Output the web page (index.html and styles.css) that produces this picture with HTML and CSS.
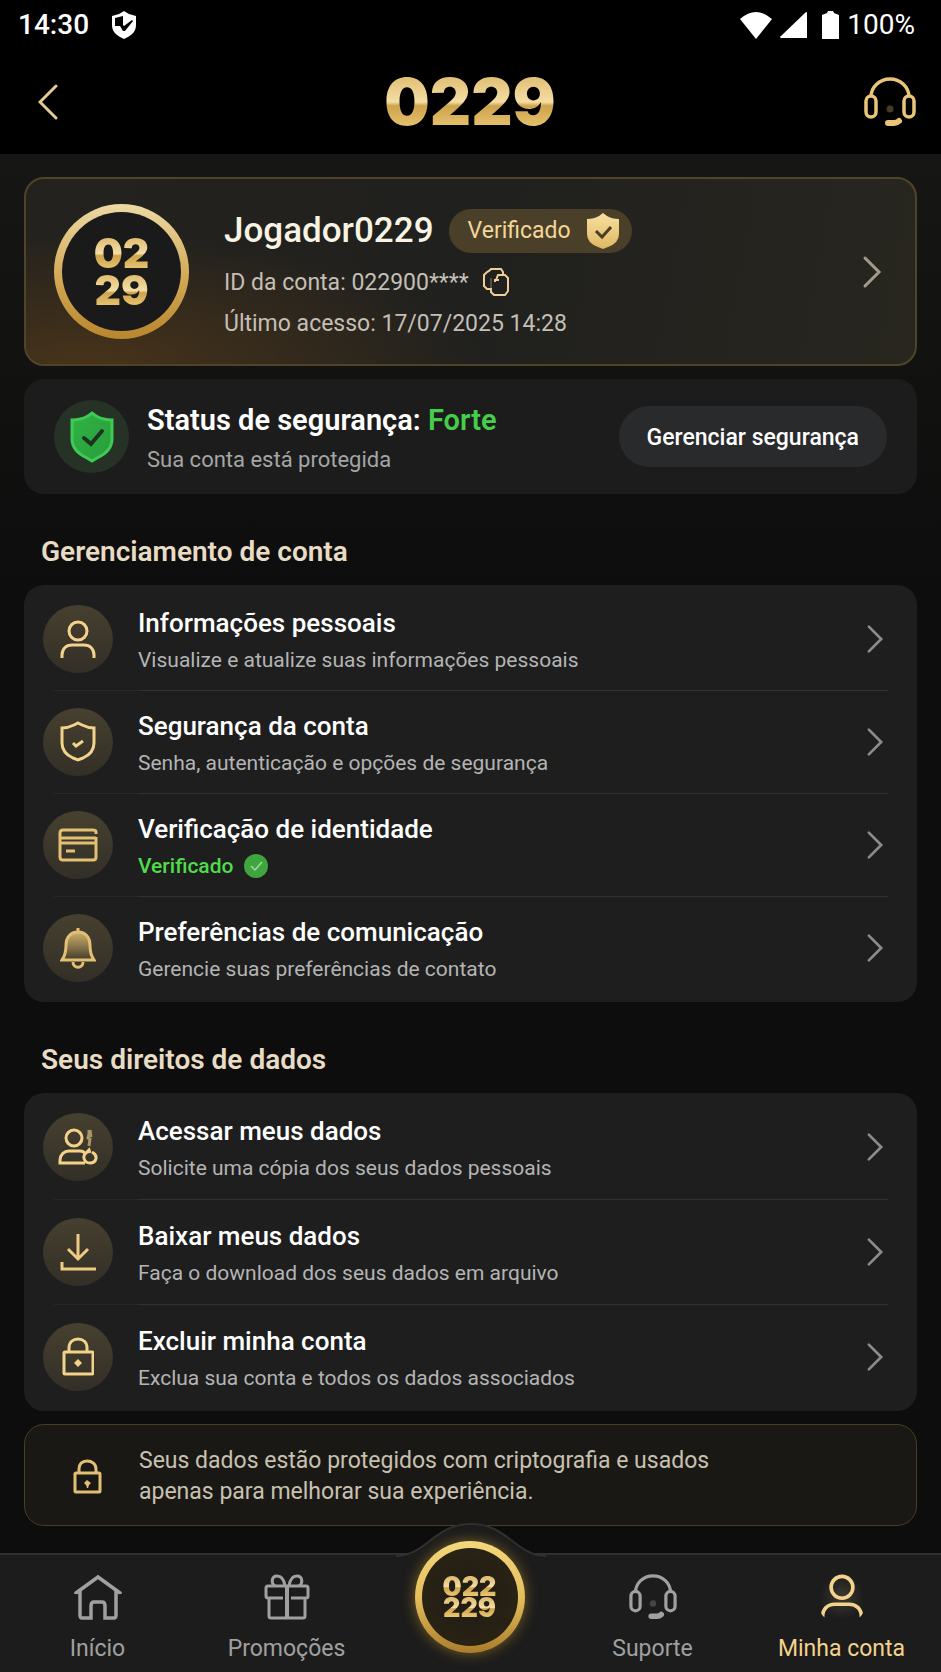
FILE: index.html
```html
<!DOCTYPE html>
<html lang="pt-BR">
  <head>
    <meta charset="UTF-8" />
    <meta name="viewport" content="width=device-width, initial-scale=1.0" />
    <title>Minha conta - 0229</title>
    <link rel="stylesheet" href="styles.css">
  </head>
  <body>
    <!-- shared gradients and symbols -->
    <svg class="defs" width="0" height="0" aria-hidden="true">
      <defs>
        <linearGradient id="gold" x1="0" y1="0" x2="0" y2="1">
          <stop offset="0" stop-color="#f8e0a0" />
          <stop offset="1" stop-color="#dfb763" />
        </linearGradient>
        <linearGradient id="bellFill" x1="0" y1="0" x2="0" y2="1">
          <stop offset="0" stop-color="#e0bd70" stop-opacity="0.9" />
          <stop offset="1" stop-color="#e0bd70" stop-opacity="0.05" />
        </linearGradient>
        <linearGradient id="green" x1="0" y1="0" x2="1" y2="1">
          <stop offset="0" stop-color="#2fb344" />
          <stop offset="1" stop-color="#2a9c3c" />
        </linearGradient>
        <symbol id="chevron" viewBox="0 0 20 34">
          <path d="M3 3l14 14L3 31" fill="none" stroke="currentColor" stroke-width="3" stroke-linecap="round" />
        </symbol>
        <symbol id="headset" viewBox="0 0 52 50">
          <g fill="none" stroke="currentColor" stroke-width="3.5">
            <path d="M7 20a19 18 0 0 1 38 0" />
            <rect x="2" y="19" width="10" height="21" rx="5" />
            <rect x="40" y="19" width="10" height="21" rx="5" />
          </g>
          <path d="M24 46h6q3 0 5-2" fill="none" stroke="currentColor" stroke-width="6" stroke-linecap="round" />
          <circle cx="26" cy="32" r="3.5" fill="currentColor" opacity="0.3" />
        </symbol>
        <symbol id="user" viewBox="0 0 36 38">
          <circle cx="18" cy="11" r="9" fill="none" stroke="currentColor" stroke-width="3" />
          <path d="M2 38v-3c0-6 4-10 10-10h12c6 0 10 4 10 10v3" fill="none" stroke="currentColor" stroke-width="3" />
        </symbol>
      </defs>
    </svg>

    <div class="status-bar">
      <div class="status-left">
        <span>14:30</span>
        <svg width="26" height="28" viewBox="0 0 26 28">
          <path d="M13 0l5 3 7 2v9c0 7-5 11-12 14C6 25 1 21 1 14V5l7-2z" fill="#fff" />
          <path d="M12 5L4 7v8h5l3 5h2l8-10-1-1-8 6-1-1z" fill="#000" />
        </svg>
      </div>
      <div class="status-right">
        <svg width="32" height="27" viewBox="0 0 32 27"><path d="M0 7Q16-7 32 7L16 27z" fill="#fff" /></svg>
        <svg width="27" height="26" viewBox="0 0 27 26"><path d="M26 0q1 0 1 1v25H1q-2-1 0-2z" fill="#fff" /></svg>
        <svg width="17" height="28" viewBox="0 0 17 28"><path d="M0 4l5-2 1-2h5l1 2 5 2v24H0z" fill="#fff" /></svg>
        <span>100%</span>
      </div>
    </div>

    <header class="header">
      <button class="icon-button back" aria-label="Voltar">
        <svg width="20" height="36" viewBox="0 0 20 36"><path d="M18 2L2 18l16 16" fill="none" stroke="#e8c990" stroke-width="3" stroke-linecap="round" /></svg>
      </button>
      <div class="logo gold-text">0229</div>
      <button class="icon-button support" aria-label="Suporte">
        <svg width="52" height="50"><use href="#headset" /></svg>
      </button>
    </header>

    <main class="content">
      <section class="card profile">
        <div class="avatar">
          <div class="avatar-inner">
            <span class="gold-text">02</span>
            <span class="gold-text">29</span>
          </div>
        </div>
        <div class="profile-info">
          <div class="name-row">
            <h1>Jogador0229</h1>
            <span class="badge">
              Verificado
              <svg width="32" height="36" viewBox="0 0 32 36">
                <path d="M16 0l4 3q5 3 12 3v15q0 9-11 13l-5 2-5-2Q0 30 0 21V6q7 0 12-3z" fill="url(#gold)" />
                <path d="M9 18l6 6 9-10" fill="none" stroke="#4a3e25" stroke-width="3" />
              </svg>
            </span>
          </div>
          <div class="id-row">
            <span>ID da conta: 022900****</span>
            <button class="icon-button copy" aria-label="Copiar ID">
              <svg width="26" height="28" viewBox="0 0 26 28">
                <g fill="none" stroke="#edcf98" stroke-width="2">
                  <path d="M7 21H4l-3-3V7l3-3 2-1 2-2h10l2 3v3" />
                  <path d="M13 12l2-5h7l3 3v13l-3 4H11l-3-3v-4" />
                  <path d="M12 14v-2h4" />
                </g>
                <path d="M8 20V10" stroke="#8a7a5c" stroke-width="1" />
              </svg>
            </button>
          </div>
          <div class="last-access">Último acesso: 17/07/2025 14:28</div>
        </div>
        <svg class="chevron light" width="20" height="34"><use href="#chevron" /></svg>
      </section>

      <section class="card security">
        <div class="security-icon">
          <svg width="44" height="52" viewBox="0 0 44 52">
            <path d="M22 2l4 3q7 4 16 4v19q0 12-15 19l-5 3-5-3Q2 40 2 28V9q9 0 16-4z" fill="url(#green)" stroke="#3ecb55" stroke-width="3" />
            <path d="M14 27l7 6 11-13" fill="none" stroke="#1d3320" stroke-width="4" stroke-linecap="round" />
          </svg>
        </div>
        <div class="security-text">
          <h2>Status de segurança: <span class="strong">Forte</span></h2>
          <p>Sua conta está protegida</p>
        </div>
        <button class="manage-button">Gerenciar segurança</button>
      </section>

      <h2 class="section-title">Gerenciamento de conta</h2>
      <nav class="card list">
        <a class="row" href="#">
          <span class="row-icon"><svg width="36" height="38"><use href="#user" /></svg></span>
          <span class="row-text">
            <span class="row-title">Informações pessoais</span>
            <span class="row-sub">Visualize e atualize suas informações pessoais</span>
          </span>
          <svg class="chevron" width="18" height="30"><use href="#chevron" /></svg>
        </a>
        <a class="row" href="#">
          <span class="row-icon">
            <svg width="36" height="41" viewBox="0 0 36 41">
              <path d="M18 2l4 2q6 3 12 3v15q0 10-11 15l-5 2-5-2Q2 32 2 22V7q6 0 12-3z" fill="none" stroke="currentColor" stroke-width="3" />
              <path d="M13 22l3 3 7-5" fill="none" stroke="currentColor" stroke-width="3" />
            </svg>
          </span>
          <span class="row-text">
            <span class="row-title">Segurança da conta</span>
            <span class="row-sub">Senha, autenticação e opções de segurança</span>
          </span>
          <svg class="chevron" width="18" height="30"><use href="#chevron" /></svg>
        </a>
        <a class="row" href="#">
          <span class="row-icon">
            <svg width="40" height="34" viewBox="0 0 40 34">
              <g fill="none" stroke="#e3bf73" stroke-width="3">
                <path d="M38 6V4q0-2-3-2H5Q2 2 2 5v24q0 3 3 3h30q3 0 3-3V9" />
                <path d="M2 10h36M2 15h36M8 23h9" />
              </g>
            </svg>
          </span>
          <span class="row-text">
            <span class="row-title">Verificação de identidade</span>
            <span class="row-sub verified">
              Verificado
              <svg width="24" height="24" viewBox="0 0 24 24">
                <circle cx="12" cy="12" r="12" fill="#3fa53f" />
                <path d="M7 12l4 4 7-8" fill="none" stroke="#a5dc9c" stroke-width="1.5" />
              </svg>
            </span>
          </span>
          <svg class="chevron" width="18" height="30"><use href="#chevron" /></svg>
        </a>
        <a class="row" href="#">
          <span class="row-icon">
            <svg width="36" height="42" viewBox="0 0 36 42">
              <path d="M18 5C10 5 6 11 6 18c0 8-1 11-4 15h32c-3-4-4-7-4-15 0-7-4-13-12-13z" fill="url(#bellFill)" stroke="#e3bf73" stroke-width="3" />
              <path d="M18 5V1M13 35c0 7 10 7 10 0" fill="none" stroke="#e3bf73" stroke-width="3" />
            </svg>
          </span>
          <span class="row-text">
            <span class="row-title">Preferências de comunicação</span>
            <span class="row-sub">Gerencie suas preferências de contato</span>
          </span>
          <svg class="chevron" width="18" height="30"><use href="#chevron" /></svg>
        </a>
      </nav>

      <h2 class="section-title">Seus direitos de dados</h2>
      <nav class="card list tall">
        <a class="row" href="#">
          <span class="row-icon">
            <svg width="40" height="37" viewBox="0 0 40 37">
              <g fill="none" stroke="currentColor" stroke-width="3">
                <circle cx="16" cy="10" r="8" />
                <path d="M27 35H2v-3c0-5 4-9 9-9h11q3 0 5 2" />
                <path d="M34 24c7 4 4 11-2 11s-8-7-4-10l3-3 1 3" />
              </g>
              <path d="M31 2v4l-1 4 2 1-1 7M32 2l1 7" fill="none" stroke="currentColor" stroke-width="3" opacity="0.6" />
            </svg>
          </span>
          <span class="row-text">
            <span class="row-title">Acessar meus dados</span>
            <span class="row-sub">Solicite uma cópia dos seus dados pessoais</span>
          </span>
          <svg class="chevron" width="18" height="30"><use href="#chevron" /></svg>
        </a>
        <a class="row" href="#">
          <span class="row-icon">
            <svg width="36" height="38" viewBox="0 0 36 38">
              <path d="M18 1v25M8 16l10 10 10-10M2 29v7h34" fill="none" stroke="#edcb82" stroke-width="3" />
            </svg>
          </span>
          <span class="row-text">
            <span class="row-title">Baixar meus dados</span>
            <span class="row-sub">Faça o download dos seus dados em arquivo</span>
          </span>
          <svg class="chevron" width="18" height="30"><use href="#chevron" /></svg>
        </a>
        <a class="row" href="#">
          <span class="row-icon">
            <svg width="32" height="39" viewBox="0 0 32 39">
              <path d="M7 15v-4C7 5 11 2 16 2s9 3 9 9v4" fill="none" stroke="currentColor" stroke-width="3" />
              <rect x="2" y="15" width="29" height="22" rx="1" fill="none" stroke="currentColor" stroke-width="3" />
              <path d="M16 22l4 4-4 4-4-4z" fill="currentColor" />
            </svg>
          </span>
          <span class="row-text">
            <span class="row-title">Excluir minha conta</span>
            <span class="row-sub">Exclua sua conta e todos os dados associados</span>
          </span>
          <svg class="chevron" width="18" height="30"><use href="#chevron" /></svg>
        </a>
      </nav>

      <section class="card notice">
        <svg width="29" height="35" viewBox="0 0 29 35">
          <path d="M6 13v-3c0-5 3-8 8-8s9 3 9 8v3" fill="none" stroke="#e3bf73" stroke-width="3" />
          <rect x="2" y="14" width="25" height="19" rx="1" fill="none" stroke="#e3bf73" stroke-width="3" />
          <path d="M14 18v3l4 3-2 2-1 3h-1l-1-3-2-2 3-3z" fill="#e3bf73" />
        </svg>
        <p>Seus dados estão protegidos com criptografia e usados apenas para melhorar sua experiência.</p>
      </section>
    </main>

    <nav class="tab-bar">
      <svg class="bump" width="150" height="34" viewBox="0 0 150 34">
        <path d="M0 33C30 33 38 1 75 1s45 32 75 32v1H0z" fill="#1c1c1c" />
        <path d="M0 33C30 33 38 1 75 1s45 32 75 32" fill="none" stroke="#303030" stroke-width="2" />
      </svg>
      <a class="tab" href="#">
        <svg width="48" height="46" viewBox="0 0 48 46">
          <g fill="none" stroke="currentColor" stroke-width="3.5">
            <path d="M2 20V19L24 3l22 16v1" />
            <path d="M6 17v24q0 3 2 3h9V32q0-4 3-4h8q3 0 3 4v12h9q2 0 2-3V17" />
          </g>
        </svg>
        <span>Início</span>
      </a>
      <a class="tab" href="#">
        <svg width="46" height="46" viewBox="0 0 46 46">
          <g fill="none" stroke="currentColor" stroke-width="3">
            <path d="M19 24H4q-2 0-2-2v-8q0-2 2-2h38q2 0 2 2v8q0 2-2 2H27" />
            <path d="M5 24v18q0 2 2 2h32q2 0 2-2V24" />
            <path d="M23 12v32" stroke-width="4" />
            <path d="M21 12C20 5 17 2 13 2c-6 0-6 8-2 10M25 12c1-7 4-10 8-10 6 0 6 8 2 10" />
          </g>
        </svg>
        <span>Promoções</span>
      </a>
      <div class="tab-center">
        <a class="coin" href="#">
          <span class="coin-inner">
            <span class="gold-text">022</span>
            <span class="gold-text">229</span>
          </span>
        </a>
      </div>
      <a class="tab" href="#">
        <svg width="48" height="46" viewBox="0 0 52 50"><use href="#headset" /></svg>
        <span>Suporte</span>
      </a>
      <a class="tab active" href="#">
        <svg width="44" height="46" viewBox="0 0 36 38"><use href="#user" /></svg>
        <span>Minha conta</span>
      </a>
    </nav>
  </body>
</html>
```
FILE: styles.css
```css
* {
  box-sizing: border-box;
}

body {
  margin: 0;
  min-height: 100vh;
  display: flex;
  flex-direction: column;
  font-family: Roboto, "Liberation Sans", sans-serif;
  color: #fff;
  background: linear-gradient(to bottom, #161614 150px, #0d0d0d 600px);
}

h1,
h2,
p {
  margin: 0;
}

a {
  color: inherit;
  text-decoration: none;
}

svg {
  display: block;
  flex-shrink: 0;
}

.defs {
  position: absolute;
}

.icon-button {
  padding: 0;
  border: none;
  background: none;
  color: inherit;
  cursor: pointer;
}

.gold-text {
  display: block;
  font-family: Inter, Roboto, sans-serif;
  font-weight: 900;
  color: transparent;
  background: linear-gradient(to bottom, #e0be74 10%, #f4dea4 50%, #cfa34d 56%, #e6c36f 90%);
  -webkit-background-clip: text;
  background-clip: text;
}

/* top bars */
.status-bar {
  display: flex;
  justify-content: space-between;
  height: 50px;
  padding: 0 26px 0 18px;
  background: #000;
  font-size: 28px;
  line-height: 50px;
}

.status-left {
  display: flex;
  align-items: center;
  gap: 22px;
  font-weight: 500;
}

.status-right {
  display: flex;
  align-items: center;
  gap: 8px;
}

.status-right svg:nth-child(2) {
  margin-right: 7px;
}

.header {
  display: grid;
  grid-template-columns: 1fr auto 1fr;
  align-items: center;
  height: 104px;
  padding: 0 25px 0 24px;
  background: #000;
}

.logo {
  font-size: 64px;
  line-height: 64px;
}

.back {
  justify-self: start;
  padding-left: 14px;
}

.support {
  justify-self: end;
  color: #e8c578;
}

/* cards */
.content {
  flex: 1;
  padding: 23px 24px 27px;
}

.card {
  border-radius: 20px;
  background: #1e1e1e;
}

.profile {
  display: flex;
  align-items: center;
  height: 189px;
  padding: 0 33px 0 28px;
  border: 2px solid #4f4329;
  background: radial-gradient(ellipse 400px 130px at 60px 100%, #47331a, transparent),
    linear-gradient(100deg, #24221e, #20201e 50%, #28261f);
}

.avatar {
  width: 135px;
  height: 135px;
  padding: 8px;
  border-radius: 50%;
  background: linear-gradient(to bottom, #ecd9a4, #d0a450 60%, #b8862e);
}

.avatar-inner {
  display: flex;
  flex-direction: column;
  align-items: center;
  justify-content: center;
  height: 100%;
  border-radius: 50%;
  background: #1b1a1a;
  font-size: 41px;
  line-height: 37px;
}

.profile-info {
  flex: 1;
  padding-left: 35px;
  color: #c4bfb5;
  font-size: 23px;
  line-height: 41px;
}

.name-row {
  display: flex;
  align-items: center;
  gap: 15px;
  height: 62px;
}

.name-row h1 {
  font-size: 35px;
  font-weight: 500;
  color: #f8f3e2;
}

.badge {
  display: flex;
  align-items: center;
  gap: 16px;
  height: 44px;
  padding: 0 13px 0 19px;
  border-radius: 22px;
  background: #4a4029;
  color: #f3d698;
}

.id-row {
  display: flex;
  align-items: center;
  gap: 14px;
}

.chevron {
  color: #8c8c8c;
}

.chevron.light {
  color: #a69b88;
}

.security {
  display: flex;
  align-items: center;
  height: 115px;
  margin-top: 13px;
  padding: 0 30px;
  background: #1c1c1c;
}

.security-icon {
  display: flex;
  align-items: center;
  justify-content: center;
  width: 75px;
  height: 73px;
  border-radius: 50%;
  background: #273226;
}

.security-text {
  flex: 1;
  padding: 4px 0 0 18px;
}

.security-text h2 {
  font-size: 29px;
  line-height: 42px;
  font-weight: 600;
}

.security-text p {
  font-size: 22px;
  line-height: 38px;
  color: #a5a5a5;
}

.strong {
  color: #45cd4b;
}

.manage-button {
  height: 61px;
  padding: 2px 28px 0;
  border: none;
  border-radius: 31px;
  background: #292a2c;
  color: #fff;
  font: 500 23px Roboto, "Liberation Sans", sans-serif;
  cursor: pointer;
}

.section-title {
  padding: 38px 17px 13px;
  font-size: 28px;
  line-height: 40px;
  font-weight: 600;
  color: #e8dcc4;
}

.list {
  padding: 2px 0 3px;
}

.list.tall {
  padding: 1px 0 2px;
}

.row {
  display: flex;
  align-items: center;
  position: relative;
  height: 103px;
  padding: 0 33px 0 19px;
}

.tall .row {
  height: 105px;
}

.row + .row::before {
  content: "";
  position: absolute;
  top: 0;
  left: 30px;
  right: 29px;
  height: 1px;
  background: linear-gradient(to right, #282828 84px, #323232 84px);
}

.row-icon {
  display: flex;
  align-items: center;
  justify-content: center;
  width: 70px;
  height: 68px;
  border-radius: 50%;
  background: linear-gradient(to bottom, #46402f, #332f27);
  color: #f3d28c;
}

.row-text {
  display: flex;
  flex: 1;
  flex-direction: column;
  padding: 4px 0 0 25px;
}

.row-title {
  font-size: 26px;
  line-height: 38px;
  font-weight: 500;
}

.row-sub {
  font-size: 21px;
  line-height: 36px;
  color: #b4b4b4;
}

.verified {
  display: flex;
  align-items: center;
  gap: 11px;
  font-weight: 500;
  color: #4fdc4b;
}

.notice {
  display: flex;
  align-items: center;
  gap: 37px;
  height: 102px;
  margin-top: 13px;
  padding: 2px 186px 0 48px;
  border: 1px solid #4a3d22;
  background: #1a1814;
  color: #c8c1b1;
  font-size: 23px;
  line-height: 31px;
}

/* bottom navigation */
.tab-bar {
  position: relative;
  display: grid;
  grid-template-columns: 189fr 189fr 177fr 189fr 189fr;
  height: 119px;
  padding: 0 5px 0 3px;
  border-top: 2px solid #303030;
  background: #1c1c1c;
  color: #a0a0a0;
}

.bump {
  position: absolute;
  left: 50%;
  bottom: 100%;
  transform: translateX(-50%);
  margin-bottom: -2px;
}

.tab {
  display: flex;
  flex-direction: column;
  align-items: center;
  gap: 13px;
  padding-top: 19px;
  font-size: 23px;
  line-height: 32px;
}

.active {
  color: #f3d28c;
}

.active svg {
  border-radius: 12px;
  background: radial-gradient(circle, #3c392f, transparent 70%);
}

.tab-center {
  display: flex;
  justify-content: center;
  position: relative;
}

.coin {
  position: absolute;
  top: -14px;
  width: 110px;
  height: 112px;
  padding: 7px;
  border-radius: 50%;
  background: linear-gradient(to bottom, #f3d87c, #e4bf5c 50%, #aa7d2b);
  box-shadow: 0 0 14px #7a6026;
}

.coin-inner {
  display: flex;
  flex-direction: column;
  align-items: center;
  justify-content: center;
  height: 100%;
  border-radius: 50%;
  background: radial-gradient(circle, #1f1b14, #2d2615);
  font-size: 27px;
  line-height: 21px;
}
```
